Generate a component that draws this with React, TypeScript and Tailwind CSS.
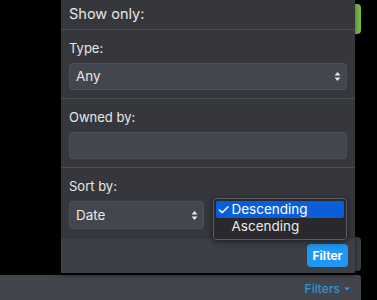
import React from "react";

const Arrows = () => (
  <svg width="7" height="11" viewBox="0 0 7 11" className="shrink-0">
    <path d="M3.5 1 L6.5 4.5 L0.5 4.5 Z" fill="#e6e6e6" />
    <path d="M3.5 10 L6.5 6.5 L0.5 6.5 Z" fill="#e6e6e6" />
  </svg>
);

export default function App() {
  return (
    <div
      className="relative w-[377px] h-[300px] bg-black overflow-hidden text-[#e8e8e8]"
      style={{ fontFamily: "Inter, 'Noto Sans', sans-serif" }}
    >
      {/* green tab */}
      <div className="absolute left-[352px] top-[4px] w-[9px] h-[30px] rounded-r-[4px] bg-[#7cbd42]" />
      {/* gray tab behind footer */}
      <div className="absolute left-[352px] top-[237px] w-[9px] h-[34px] rounded-r-[4px] bg-[#3e4146]" />

      <div className="relative z-10 ml-[61px] w-[294px] bg-[#35373c] shadow-[0_2px_6px_rgba(0,0,0,0.5)]">
        <div className="h-[30px] flex items-center px-[8px] pb-[2px] border-b border-[#4a4d53] text-[14.5px]">
          Show only:
        </div>
        <div className="h-[69px] px-[8px] pt-[10px] border-b border-[#4a4d53] text-[13px]">
          <div className="h-[16px] leading-[16px]">Type:</div>
          <div className="mt-[7px] h-[27px] rounded-[4px] bg-[#43464d] border border-[#4e5158] flex items-center justify-between pl-[6px] pr-[5px] text-[13.5px]">
            <span>Any</span>
            <Arrows />
          </div>
        </div>
        <div className="h-[69px] px-[8px] pt-[10px] border-b border-[#4a4d53] text-[13px]">
          <div className="h-[16px] leading-[16px]">Owned by:</div>
          <div className="mt-[7px] h-[27px] rounded-[4px] bg-[#43464d] border border-[#4e5158]" />
        </div>
        <div className="h-[69px] px-[8px] pt-[10px] text-[13px]">
          <div className="h-[16px] leading-[16px]">Sort by:</div>
          <div className="mt-[7px] grid grid-cols-2 gap-[9px]">
            <div className="h-[28px] rounded-[4px] bg-[#43464d] border border-[#4e5158] flex items-center justify-between pl-[6px] pr-[5px] text-[13.5px]">
              <span>Date</span>
              <Arrows />
            </div>
            <div className="relative h-[28px] rounded-[4px] bg-[#43464d] border border-[#4e5158]">
              <div className="absolute left-[-1px] top-[-4px] w-[134px] h-[42px] rounded-[4px] bg-[#2a282c] border border-[#5a5a60] p-[2px] text-[13.5px] shadow-[0_2px_6px_rgba(0,0,0,0.5)]">
                <div className="h-[17px] rounded-[2px] bg-[#0a5fd8] text-white flex items-center">
                  <span className="w-[16px] text-center text-[15px] leading-none">✓</span>
                  <span>Descending</span>
                </div>
                <div className="h-[17px] flex items-center text-[#ececec]">
                  <span className="w-[16px]" />
                  <span>Ascending</span>
                </div>
              </div>
            </div>
          </div>
        </div>
        <div className="h-[36px] bg-[#3c3f45] border-t border-[#2f3135] flex items-center justify-end pr-[7px]">
          <div className="h-[23px] w-[41px] rounded-[4px] bg-[#2196f3] text-white text-[12px] font-bold flex items-center justify-center">
            Filter
          </div>
        </div>
      </div>

      <div className="absolute left-0 top-[275px] w-[361px] h-[25px] bg-[#42454b] rounded-tr-[3px] flex items-end justify-end pr-[10px] pb-[2px]">
        <span className="text-[12px] text-[#3490d8] font-medium">Filters</span>
        <svg width="8" height="8" viewBox="0 0 8 8" className="ml-[3px] mb-[5px]">
          <path d="M1 2.5 L7 2.5 L4 5.5 Z" fill="#3490d8" />
        </svg>
      </div>
    </div>
  );
}
